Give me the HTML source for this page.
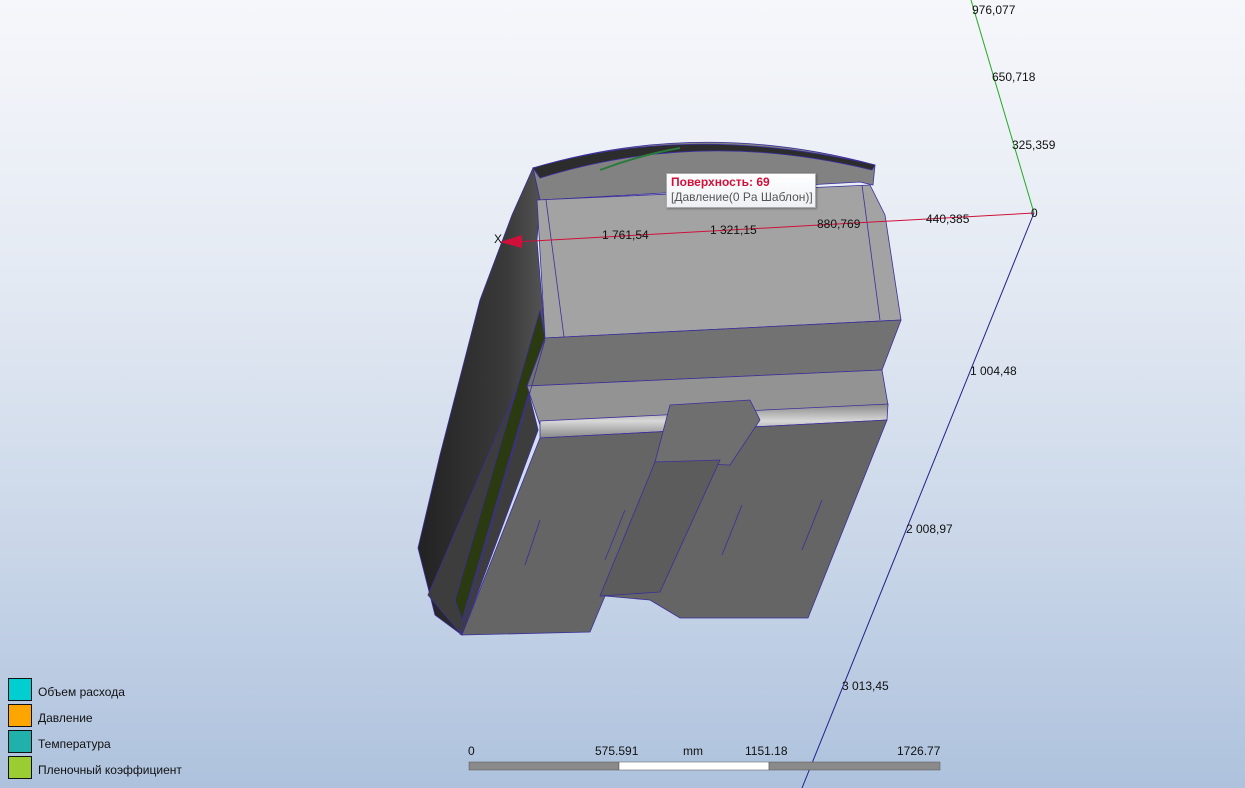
<!DOCTYPE html>
<html><head><meta charset="utf-8"><style>
body{margin:0;width:1245px;height:788px;overflow:hidden;background:linear-gradient(#f6f7fb 0%,#e4eaf3 35%,#c9d6e8 70%,#aec2dd 100%);font-family:"Liberation Sans","DejaVu Sans",sans-serif;position:relative}
.t{position:absolute;font-size:12px;color:#111;white-space:nowrap}
.lg{position:absolute;left:8px;width:24px;height:23px;border:1px solid #111;box-sizing:border-box}
.ll{position:absolute;left:38px;font-size:12px;color:#111}
</style></head><body>
<svg width="1245" height="788" style="position:absolute;left:0;top:0">
<defs>
<linearGradient id="dk" x1="0" y1="0" x2="1" y2="0"><stop offset="0" stop-color="#222"/><stop offset="0.7" stop-color="#3a3a3a"/><stop offset="1" stop-color="#555"/></linearGradient>
<linearGradient id="rod" x1="0" y1="0" x2="0" y2="1"><stop offset="0" stop-color="#888"/><stop offset="0.5" stop-color="#d8d8d8"/><stop offset="1" stop-color="#888"/></linearGradient>
</defs>
<line x1="971" y1="0" x2="1034" y2="213" stroke="#2a2" stroke-width="1"/>
<line x1="1034" y1="213" x2="802" y2="788" stroke="#22228a" stroke-width="1"/>
<g stroke="#3a2f9a" stroke-width="0.8">
<path d="M533,168 Q700,118 875,165 L873,185 L860,182 L540,200 Z" fill="#828282"/>
<path d="M533,168 Q690,122 875,165 L872,170 Q700,128 540,178 Z" fill="#2c2c2c"/>
<path d="M533,168 L540,200 L537,240 L545,338 L527,386 L538,430 L462,635 L435,615 L418,548 L440,455 L480,300 L512,215 Z" fill="url(#dk)"/>
<path d="M540,335 L545,338 L527,386 L538,430 L462,635 L428,595 Z" fill="#3d3d3d"/>
<path d="M540,310 L545,338 L462,620 L455,600 Z" fill="#2b3a10"/>
<path d="M537,200 L870,185 L885,215 L901,320 L545,338 Z" fill="#a3a3a3"/>
<path d="M545,338 L901,320 L882,370 L527,386 Z" fill="#727272"/>
<path d="M527,386 L882,370 L888,405 L540,425 Z" fill="#939393"/>
<path d="M540,421 L888,404 L887,420 L540,438 Z" fill="url(#rod)"/>
<path d="M540,438 L887,420 L808,618 L680,618 L650,600 L605,596 L590,632 L462,635 Z" fill="#656565"/>
<path d="M670,405 L750,400 L760,420 L730,465 L655,462 Z" fill="#6f6f6f"/>
<path d="M655,462 L720,460 L660,592 L600,596 Z" fill="#5c5c5c"/>
<line x1="545" y1="340" x2="460" y2="635"/>
<line x1="540" y1="520" x2="525" y2="565" fill="none"/>
<line x1="625" y1="510" x2="605" y2="560"/>
<line x1="742" y1="505" x2="722" y2="555"/>
<line x1="822" y1="500" x2="802" y2="550"/>
<line x1="862" y1="185" x2="880" y2="320"/>
<line x1="546" y1="200" x2="564" y2="337"/>
</g>
<path d="M600,170 Q640,155 680,148" stroke="#2a7a3a" stroke-width="2" fill="none"/>
<line x1="1034" y1="213" x2="515" y2="242" stroke="#d0103a" stroke-width="1"/>
<path d="M500,242 L522,235 L522,248 Z" fill="#d0103a"/>
<rect x="469" y="762" width="150" height="8" fill="#8a8a8a" stroke="#555" stroke-width="0.5"/>
<rect x="619" y="762" width="150" height="8" fill="#fff" stroke="#555" stroke-width="0.5"/>
<rect x="769" y="762" width="171" height="8" fill="#8a8a8a" stroke="#555" stroke-width="0.5"/>
</svg>
<div style="position:absolute;left:666px;top:173px;width:148px;height:33px;background:linear-gradient(#fff,#eef0f4);border:1px solid #aaa;box-shadow:1px 1px 2px rgba(0,0,0,.3)"></div>
<div class="t" style="left:671px;top:175px;color:#d0103a;font-weight:bold">Поверхность: 69</div>
<div class="t" style="left:671px;top:190px;color:#555">[Давление(0 Pa Шаблон)]</div>
<div class="t" style="left:494px;top:232px">X</div>
<div class="t" style="left:602px;top:228px">1 761,54</div>
<div class="t" style="left:710px;top:223px">1 321,15</div>
<div class="t" style="left:817px;top:217px">880,769</div>
<div class="t" style="left:926px;top:212px">440,385</div>
<div class="t" style="left:1031px;top:206px">0</div>
<div class="t" style="left:972px;top:3px">976,077</div>
<div class="t" style="left:992px;top:70px">650,718</div>
<div class="t" style="left:1012px;top:138px">325,359</div>
<div class="t" style="left:970px;top:364px">1 004,48</div>
<div class="t" style="left:906px;top:522px">2 008,97</div>
<div class="t" style="left:842px;top:679px">3 013,45</div>
<div class="t" style="left:468px;top:744px">0</div>
<div class="t" style="left:595px;top:744px">575.591</div>
<div class="t" style="left:683px;top:744px">mm</div>
<div class="t" style="left:745px;top:744px">1151.18</div>
<div class="t" style="left:897px;top:744px">1726.77</div>
<div class="lg" style="top:678px;background:#00ced1"></div><div class="ll" style="top:685px">Объем расхода</div>
<div class="lg" style="top:704px;background:#ffa500"></div><div class="ll" style="top:711px">Давление</div>
<div class="lg" style="top:730px;background:#20b2aa"></div><div class="ll" style="top:737px">Температура</div>
<div class="lg" style="top:756px;background:#9acd32"></div><div class="ll" style="top:763px">Пленочный коэффициент</div>
</body></html>
